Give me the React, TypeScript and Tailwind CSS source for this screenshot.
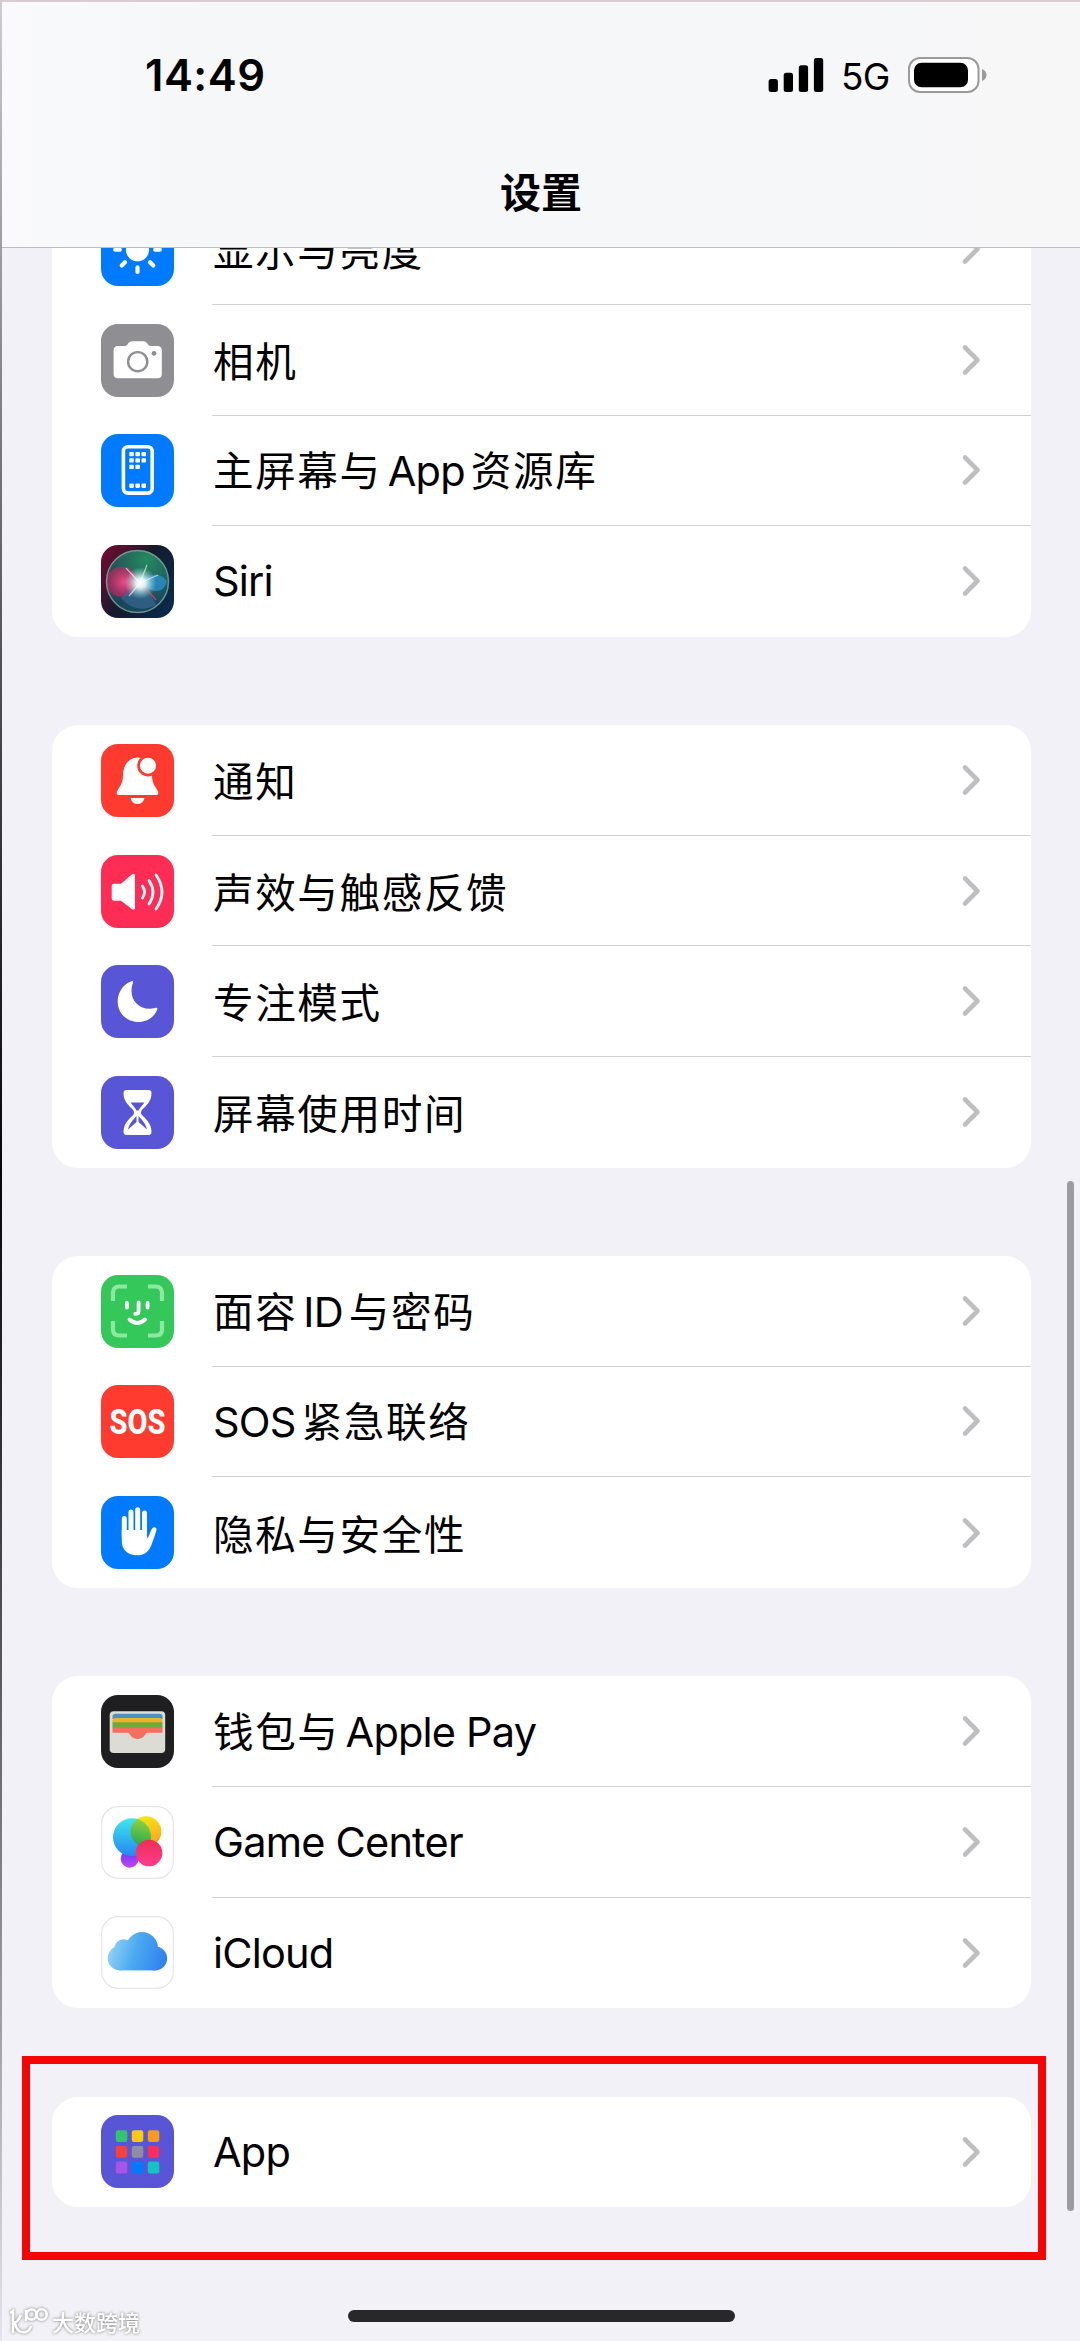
import type { ReactNode } from "react";

interface RowI {
  label: string;
  icon: ReactNode;
}

const Tile = ({ color, children }: { color: string; children?: ReactNode }) => (
  <svg viewBox="0 0 73 73" className="size-[73px] shrink-0 overflow-visible">
    <rect width="73" height="73" rx="17" fill={color} />
    {children}
  </svg>
);

const SunIcon = () => (
  <Tile color="#007aff">
    <circle cx="36.5" cy="36.7" r="11.6" fill="#fff" />
    {[0, 45, 90, 135, 180, 225, 270, 315].map((deg) => (
      <path
        key={deg}
        d="M36.5 54.4v4.6"
        stroke="#fff"
        strokeWidth="4.2"
        strokeLinecap="round"
        transform={`rotate(${deg} 36.5 36.7)`}
      />
    ))}
  </Tile>
);

const CameraIcon = () => (
  <Tile color="#8e8e93">
    <path
      d="M17 22H24C27 22 27 17.3 31 17.3H42.5C46.5 17.3 46.5 22 49.5 22H56.5Q60.8 22 60.8 26.5V50Q60.8 54.3 56.5 54.3H17Q12.6 54.3 12.6 50V26.5Q12.6 22 17 22Z"
      fill="#fff"
    />
    <circle cx="36.7" cy="37.7" r="9.6" fill="none" stroke="#8e8e93" strokeWidth="2.4" />
    <circle cx="53" cy="29.3" r="2.4" fill="#8e8e93" />
  </Tile>
);

const HomeScreenIcon = () => (
  <Tile color="#007aff">
    <rect x="22.4" y="12.7" width="28.8" height="46.4" rx="4.5" fill="none" stroke="#fff" strokeWidth="3.6" />
    {[
      [28.3, 18],
      [34.4, 18],
      [40.5, 18],
      [28.3, 24.3],
      [34.4, 24.3],
      [40.5, 24.3],
      [28.3, 30.8],
      [34.4, 30.8],
      [28.3, 49.6],
      [34.4, 49.6],
      [40.5, 49.6],
    ].map(([x, y]) => (
      <rect key={`${x}-${y}`} x={x} y={y} width="4.5" height="4.3" rx="0.8" fill="#fff" />
    ))}
  </Tile>
);

const SiriIcon = () => (
  <svg viewBox="0 0 73 73" className="size-[73px] shrink-0">
    <defs>
      <linearGradient id="siriBg" x1="0" y1="0.2" x2="1" y2="0.8">
        <stop offset="0" stopColor="#6d0c30" />
        <stop offset="0.45" stopColor="#161a2c" />
        <stop offset="1" stopColor="#0a2a4c" />
      </linearGradient>
      <radialGradient id="siriGreen" cx="0.65" cy="0.15" r="0.7">
        <stop offset="0" stopColor="#258a60" />
        <stop offset="1" stopColor="#258a60" stopOpacity="0" />
      </radialGradient>
      <radialGradient id="siriPink" cx="0.6">
        <stop offset="0" stopColor="#f04a86" />
        <stop offset="1" stopColor="#b8265e" stopOpacity="0.7" />
      </radialGradient>
      <radialGradient id="siriGlow">
        <stop offset="0" stopColor="#fff" />
        <stop offset="0.3" stopColor="#f2ffff" stopOpacity="0.9" />
        <stop offset="1" stopColor="#9be0e8" stopOpacity="0" />
      </radialGradient>
    </defs>
    <rect width="73" height="73" rx="17" fill="url(#siriBg)" />
    <circle cx="36.5" cy="36.5" r="31" fill="#1c5568" opacity="0.75" />
    <circle cx="36.5" cy="36.5" r="31" fill="url(#siriGreen)" />
    <ellipse cx="20.5" cy="37" rx="15.5" ry="15" fill="url(#siriPink)" />
    <path d="M39 38C45 29 58 26 66 36C63 49 51 49 39 38Z" fill="#2c94d8" opacity="0.7" />
    <path d="M20 53C28 45 34 42 40 38C47 44 51 51 55 60C43 67 29 64 20 53Z" fill="#3a6c9a" opacity="0.6" />
    <path d="M42 40L55 55" stroke="#c13b68" strokeWidth="1.5" />
    <circle cx="39.5" cy="38" r="16" fill="url(#siriGlow)" />
    <path d="M39 38L25 23M39 38L46 20M39 38L28 51M39 38L57 30" stroke="#fff" strokeWidth="1.2" opacity="0.6" />
    <circle cx="36.5" cy="36.5" r="31" fill="none" stroke="#8fb8a8" strokeWidth="1.5" opacity="0.7" />
  </svg>
);

const BellIcon = () => (
  <Tile color="#ff3b30">
    <path
      d="M36.5 13.5C27 14 22 22 22 31C22 40 18.5 42.5 16.2 47C15 49.5 16 51 18.3 51H54.7C57 51 58 49.5 56.8 47C54.5 42.5 51 40 51 31C51 22 46 14 36.5 13.5Z"
      fill="#fff"
    />
    <path d="M29.5 54H43.5C42.5 58 40 60 36.5 60S30.5 58 29.5 54Z" fill="#fff" />
    <circle cx="47" cy="21.7" r="10.8" fill="#ff3b30" />
    <circle cx="47" cy="21.7" r="8" fill="#fff" />
  </Tile>
);

const SoundIcon = () => (
  <Tile color="#ff2d55">
    <path
      d="M13 28.7H20L30.5 19.7C32.5 18.2 34 18.8 34 21V52.5C34 54.7 32.5 55.2 30.5 53.7L20 45.7H13Q10.7 45.7 10.7 43.5V31Q10.7 28.7 13 28.7Z"
      fill="#fff"
    />
    <path
      d="M41.5 31Q45.5 37 41.5 43M48 25.5Q56 37 48 49M55 20Q67 37 55 54"
      fill="none"
      stroke="#fff"
      strokeWidth="2.8"
      strokeLinecap="round"
    />
  </Tile>
);

const MoonIcon = () => (
  <Tile color="#5856d6">
    <path
      d="M30.5 16.2C21 20 16.7 28 16.7 36.5C16.7 48.5 26 57 37.5 57C46 57 53.5 52 56.2 44.5C56.8 42.8 55.8 42.3 54.2 43C42 46.5 30.5 38.5 30.5 26C30.5 22.5 31.2 20 32 17.8C32.5 16.3 31.8 15.7 30.5 16.2Z"
      fill="#fff"
    />
  </Tile>
);

const HourglassIcon = () => (
  <Tile color="#5856d6">
    <path
      d="M25.5 14H47.5Q50.5 14 50.5 17C50.5 26 44.5 30 40.5 34.5Q39.5 36.5 40.5 38.5C44.5 43 50.5 47 50.5 56Q50.5 59 47.5 59H25.5Q22.5 59 22.5 56C22.5 47 28.5 43 32.5 38.5Q33.5 36.5 32.5 34.5C28.5 30 22.5 26 22.5 17Q22.5 14 25.5 14Z"
      fill="#fff"
    />
    <path d="M29.5 26.5H43.5C41.5 29.5 38.8 31.5 37.5 34.5H35.5C34.2 31.5 31.5 29.5 29.5 26.5Z" fill="#5856d6" />
    <path d="M35.5 40V46L27 53.5C28 48 32 44 35.5 40ZM37.5 40V46L46 53.5C45 48 41 44 37.5 40Z" fill="#5856d6" />
  </Tile>
);

const FaceIdIcon = () => (
  <Tile color="#34c759">
    <path
      d="M12 26V18Q12 11.5 18.5 11.5H26M47 11.5H54.5Q61 11.5 61 18V26M61 46V54.5Q61 60.5 54.5 60.5H47M26 60.5H18.5Q12 60.5 12 54.5V46"
      fill="none"
      stroke="#8fe8a2"
      strokeWidth="4.2"
    />
    <path
      d="M25.9 28V32.5M46.6 28V32.5M37.6 27.5V36.5Q37.6 39 34.2 38.8M28.5 44.5Q36.5 51.5 44 44.5"
      fill="none"
      stroke="#fff"
      strokeWidth="3.8"
      strokeLinecap="round"
    />
  </Tile>
);

const SosIcon = () => (
  <Tile color="#ff3b30">
    <text
      x="8.5"
      y="49.2"
      fill="#fff"
      fontSize="35"
      fontWeight="800"
      textLength="56"
      lengthAdjust="spacingAndGlyphs"
      className="font-['Roboto',sans-serif]"
    >
      SOS
    </text>
  </Tile>
);

const HandIcon = () => (
  <Tile color="#007aff">
    <path
      d="M23.3 22.5V40M30 16V36M36.7 13.8V36M43.5 17V38"
      stroke="#fff"
      strokeWidth="5"
      strokeLinecap="round"
    />
    <path
      d="M20.8 34H46V42.5C48.5 40 49.5 34.5 51.5 32C53 30.5 56 31.5 55.5 34C54 39 52 45 50 50C47.5 56 43 59.3 36 59.3C26.5 59.3 20.8 53.5 20.8 45Z"
      fill="#fff"
    />
  </Tile>
);

const WalletIcon = () => (
  <Tile color="#1f1f22">
    <rect x="8.7" y="16.3" width="55.5" height="41.7" rx="4" fill="#dddcd4" />
    <path d="M11.5 24V21.5Q11.5 18.8 14.5 18.8H58.5Q61.5 18.8 61.5 21.5V24Z" fill="#4793b9" />
    <path d="M11.5 28V26Q11.5 23 14.5 23H58.5Q61.5 23 61.5 26V28Z" fill="#e9b32c" />
    <rect x="11.5" y="27.3" width="50" height="6" fill="#6faa38" />
    <path
      d="M11.5 32.7H61.5V37.8H47C44.5 37.8 44.5 39.5 43 41.3C39.5 45 33.5 45 30 41.3C28.5 39.5 28.5 37.8 26 37.8H11.5Z"
      fill="#f3705e"
    />
  </Tile>
);

const GameCenterIcon = () => (
  <svg viewBox="0 0 73 73" className="size-[73px] shrink-0">
    <defs>
      <linearGradient id="gcBlue" x1="0" y1="0" x2="0" y2="1">
        <stop offset="0" stopColor="#3ee6f2" />
        <stop offset="1" stopColor="#2487f0" />
      </linearGradient>
      <linearGradient id="gcYellow" x1="0" y1="0" x2="0.3" y2="1">
        <stop offset="0" stopColor="#f8f012" />
        <stop offset="1" stopColor="#fba51c" />
      </linearGradient>
      <linearGradient id="gcGreen" x1="0.5" y1="0" x2="0.3" y2="1">
        <stop offset="0" stopColor="#a2d83a" />
        <stop offset="1" stopColor="#22a850" />
      </linearGradient>
      <linearGradient id="gcPurple" x1="0" y1="0" x2="0" y2="1">
        <stop offset="0" stopColor="#5a3bf0" />
        <stop offset="1" stopColor="#c743f7" />
      </linearGradient>
      <linearGradient id="gcPink" x1="0" y1="0" x2="0" y2="1">
        <stop offset="0" stopColor="#ee2f55" />
        <stop offset="1" stopColor="#ff3b8d" />
      </linearGradient>
      <clipPath id="gcClip">
        <circle cx="31" cy="31.3" r="19" />
      </clipPath>
    </defs>
    <rect x="0.7" y="0.7" width="71.6" height="71.6" rx="16.5" fill="#fff" stroke="#e6e6e8" strokeWidth="1.2" />
    <circle cx="28.7" cy="52.7" r="9" fill="url(#gcPurple)" />
    <circle cx="45" cy="25.5" r="15.3" fill="url(#gcYellow)" />
    <circle cx="31" cy="31.3" r="19" fill="url(#gcBlue)" />
    <circle cx="45" cy="25.5" r="15.3" fill="url(#gcGreen)" clipPath="url(#gcClip)" />
    <circle cx="48" cy="47" r="13.3" fill="url(#gcPink)" />
  </svg>
);

const ICloudIcon = () => (
  <svg viewBox="0 0 73 73" className="size-[73px] shrink-0">
    <defs>
      <linearGradient id="cloud" gradientUnits="userSpaceOnUse" x1="8" y1="30" x2="64" y2="46">
        <stop offset="0" stopColor="#93d3f5" />
        <stop offset="0.45" stopColor="#4cabf0" />
        <stop offset="1" stopColor="#2f80ee" />
      </linearGradient>
    </defs>
    <rect x="0.7" y="0.7" width="71.6" height="71.6" rx="16.5" fill="#fff" stroke="#e6e6e8" strokeWidth="1.2" />
    <g fill="url(#cloud)">
      <circle cx="22.5" cy="32.5" r="9.2" />
      <circle cx="18.9" cy="42.2" r="12.2" />
      <circle cx="41" cy="32" r="16" />
      <circle cx="54.2" cy="42.5" r="11.9" />
      <rect x="18.5" y="32" width="36" height="22.4" />
    </g>
  </svg>
);

const AppsIcon = () => (
  <Tile color="#5856d6">
    {[
      ["#34c46c", "#fdca10", "#f89a1c"],
      ["#f0423e", "#8e8ea0", "#f92e5c"],
      ["#a855e6", "#007aff", "#10c6c0"],
    ].map((colors, row) =>
      colors.map((color, col) => (
        <rect key={color} x={14.8 + col * 16} y={15.2 + row * 15.7} width="11.5" height="11.8" rx="2.2" fill={color} />
      ))
    )}
  </Tile>
);

const groups: RowI[][] = [
  [
    { label: "显示与亮度", icon: <SunIcon /> },
    { label: "相机", icon: <CameraIcon /> },
    { label: "主屏幕与 App资源库", icon: <HomeScreenIcon /> },
    { label: "Siri", icon: <SiriIcon /> },
  ],
  [
    { label: "通知", icon: <BellIcon /> },
    { label: "声效与触感反馈", icon: <SoundIcon /> },
    { label: "专注模式", icon: <MoonIcon /> },
    { label: "屏幕使用时间", icon: <HourglassIcon /> },
  ],
  [
    { label: "面容ID与密码", icon: <FaceIdIcon /> },
    { label: "SOS紧急联络", icon: <SosIcon /> },
    { label: "隐私与安全性", icon: <HandIcon /> },
  ],
  [
    { label: "钱包与 Apple Pay", icon: <WalletIcon /> },
    { label: "Game Center", icon: <GameCenterIcon /> },
    { label: "iCloud", icon: <ICloudIcon /> },
  ],
  [{ label: "App", icon: <AppsIcon /> }],
];

// Latin words and Chinese text use different fonts and spacing
const Label = ({ text }: { text: string }) => (
  <span className="flex items-baseline whitespace-pre pl-px leading-[60px] text-black">
    {text.split(/([A-Za-z][A-Za-z ]*)/).filter(Boolean).map((part) =>
      /[A-Za-z]/.test(part) ? (
        <span key={part} className="mr-[6px] font-['Inter',sans-serif] text-[41.5px] tracking-[-0.8px] [.cjk+&]:ml-[6px]">
          {part}
        </span>
      ) : (
        <span key={part} className="cjk font-['Noto_Sans_CJK_SC',sans-serif] text-[40.6px] tracking-[1.6px]">
          {part.trim()}
        </span>
      )
    )}
  </span>
);

const Row = ({ row, last }: { row: RowI; last: boolean }) => (
  <li className="flex h-[110.6px] items-center pl-[49px]">
    {row.icon}
    <div
      className={`ml-[38px] flex h-full flex-1 items-center justify-between pr-[50px] ${
        last ? "" : "border-b border-[#d0d0d3]"
      }`}
    >
      <Label text={row.label} />
      <svg viewBox="0 0 20 32" className="h-8 w-5" fill="none">
        <path d="M4 3.5L16.5 16L4 28.5" stroke="#bfbfc1" strokeWidth="4.6" strokeLinecap="round" strokeLinejoin="round" />
      </svg>
    </div>
  </li>
);

const StatusBar = () => (
  <div className="flex h-[146px] items-center justify-between pl-[145px] pr-[92px]">
    <span className="pt-[2px] font-['Inter',sans-serif] text-[43.5px] font-semibold tracking-[0.5px] text-black">14:49</span>
    <div className="flex items-center">
      <svg viewBox="0 0 56 34" className="h-[34px] w-14">
        <rect x="0.6" y="21" width="9.3" height="13" rx="2.5" />
        <rect x="15.7" y="14.8" width="9.3" height="19.2" rx="2.5" />
        <rect x="30.8" y="7.3" width="9.3" height="26.7" rx="2.5" />
        <rect x="45.9" y="0" width="9.3" height="34" rx="2.5" />
      </svg>
      <span className="ml-[17px] w-[50px] pt-[3px] font-['Inter',sans-serif] text-[37px] tracking-[-0.8px] text-black">5G</span>
      <svg viewBox="0 0 80 36" className="ml-[17px] h-9 w-20">
        <rect x="1" y="1" width="69.5" height="34" rx="11" fill="#fff" stroke="#9b9b9b" strokeWidth="2" />
        <rect x="6" y="5.8" width="54" height="24.4" rx="7.5" />
        <path d="M74 12Q78.5 14 78.5 18T74 24Z" fill="#9b9b9b" />
      </svg>
    </div>
  </div>
);

const Watermark = () => (
  <div className="absolute bottom-[6px] left-[9px] flex items-center gap-[3px] text-white drop-shadow-[0_0_1.5px_#777]">
    <svg viewBox="0 0 40 28" className="h-7 w-10" fill="none" stroke="currentColor" strokeWidth="2.6">
      <path d="M1 6L4 4V26M6 15C7 28 20 28 22 19M4 16C9 16 10 11 12 8" />
      <path d="M17 14V3" />
      <circle cx="22.5" cy="7.5" r="5" />
      <circle cx="32.5" cy="7.5" r="5.2" />
    </svg>
    <span className="font-['Noto_Sans_CJK_SC',sans-serif] text-[22px] font-medium leading-7">大数跨境</span>
  </div>
);

const App = () => {
  return (
    <div className="relative flex h-[2341px] w-[1080px] flex-col overflow-hidden bg-[#f2f1f7]">
      <header className="z-10 h-[248px] shrink-0 border-b border-t-2 border-b-[#bcbcbe] border-t-[#d9cdd1] bg-linear-to-r from-[#fafafc] via-[#f5f7f9] via-20% to-[#f7f7f8]">
        <StatusBar />
        <h1 className="pl-[2px] text-center font-['Noto_Sans_CJK_SC',sans-serif] text-[41px] font-bold leading-[84px] text-black">
          设置
        </h1>
      </header>
      <main className="-mt-[53.7px] flex flex-col gap-[88.5px] pl-[52px] pr-[49px]">
        {groups.map((rows, i) => (
          <ul key={i} className="rounded-[26px] bg-white">
            {rows.map((row, j) => (
              <Row key={row.label} row={row} last={j === rows.length - 1} />
            ))}
          </ul>
        ))}
      </main>
      <div className="absolute left-0 top-0 z-20 h-full w-[1.5px] bg-linear-to-b from-[#cfcdd2] via-[#06060e] via-50% to-[#e3e6ee]" />
      <div className="absolute left-[22px] top-[2056px] h-[204px] w-[1024px] border-8 border-[#f50505]" />
      <div className="absolute right-[6px] top-[1181px] h-[1030px] w-[7px] rounded-full bg-[#9b9ba0]" />
      <div className="absolute left-[348px] top-[2310px] h-3 w-[387px] rounded-full bg-[#28282b]" />
      <Watermark />
    </div>
  );
};

export default App;
